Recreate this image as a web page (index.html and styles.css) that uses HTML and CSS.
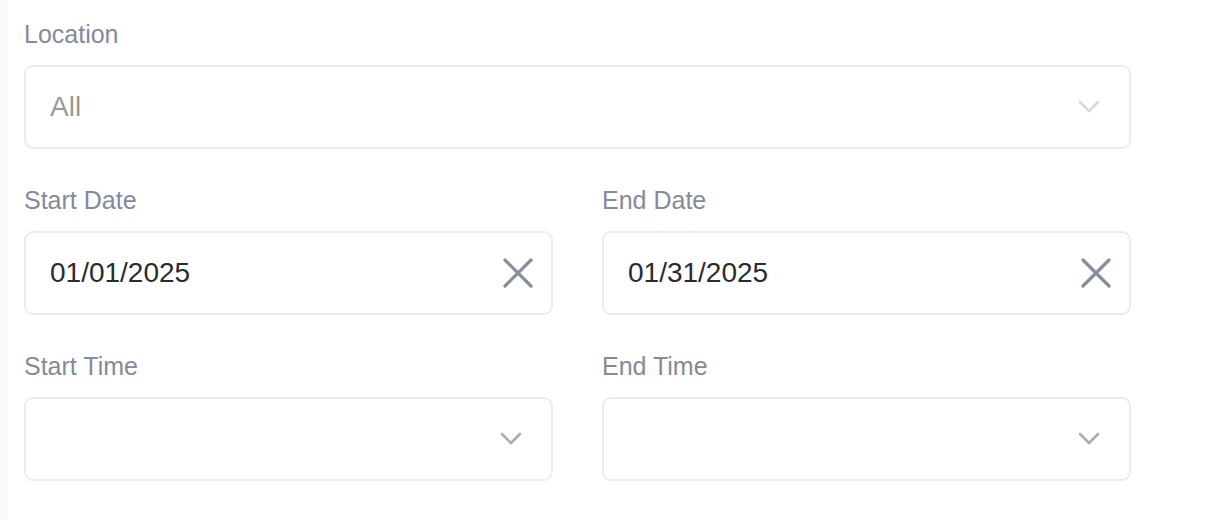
FILE: index.html
```html
<html>
<head>
    <meta http-equiv="Content-Type" content="text/html; charset=UTF-8" />
    <title>Report Filters</title>
    <link rel="stylesheet" href="styles.css">
</head>
<body>

<div class="filterForm">

    <!-- LOCATION -->
    <div class="field">
        <label class="fieldLabel">Location</label>
        <div class="fieldBox disabled">
            <span class="fieldValue placeholder">All</span>
            <svg class="chevron" width="22" height="14" viewBox="0 0 22 14">
                <polyline points="2,2 11,11 20,2" />
            </svg>
        </div>
    </div>

    <!-- DATES -->
    <div class="fieldRow">
        <div class="field">
            <label class="fieldLabel">Start Date</label>
            <div class="fieldBox">
                <span class="fieldValue">01/01/2025</span>
                <svg class="clear" width="30" height="30" viewBox="0 0 30 30">
                    <line x1="2" y1="2" x2="28" y2="28" />
                    <line x1="28" y1="2" x2="2" y2="28" />
                </svg>
            </div>
        </div>
        <div class="field">
            <label class="fieldLabel">End Date</label>
            <div class="fieldBox">
                <span class="fieldValue">01/31/2025</span>
                <svg class="clear" width="30" height="30" viewBox="0 0 30 30">
                    <line x1="2" y1="2" x2="28" y2="28" />
                    <line x1="28" y1="2" x2="2" y2="28" />
                </svg>
            </div>
        </div>
    </div>

    <!-- TIMES -->
    <div class="fieldRow">
        <div class="field">
            <label class="fieldLabel">Start Time</label>
            <div class="fieldBox">
                <span class="fieldValue"></span>
                <svg class="chevron" width="22" height="14" viewBox="0 0 22 14">
                    <polyline points="2,2 11,11 20,2" />
                </svg>
            </div>
        </div>
        <div class="field">
            <label class="fieldLabel">End Time</label>
            <div class="fieldBox">
                <span class="fieldValue"></span>
                <svg class="chevron" width="22" height="14" viewBox="0 0 22 14">
                    <polyline points="2,2 11,11 20,2" />
                </svg>
            </div>
        </div>
    </div>

</div>

</body>
</html>
```

FILE: styles.css
```css
html {
    width: 100%;
    height: 100%;
    background: #fff;
}

body {
    margin: 0;
    padding: 19px 0 0 16px;
    border-left: 8px solid #fafafa;
    font-family: "Liberation Sans", Helvetica, Arial, sans-serif;
    color: #333;
    background: #fff;
    min-height: 100%;
    box-sizing: border-box;
}

.filterForm {
    width: 1107px;
    display: flex;
    flex-direction: column;
    gap: 36px;
}

.fieldRow {
    display: grid;
    grid-template-columns: 1fr 1fr;
    column-gap: 49px;
}

.field {
    display: flex;
    flex-direction: column;
}

.fieldLabel {
    font-size: 25px;
    line-height: 30px;
    color: #838b9b;
    margin-bottom: 16px;
}

.fieldBox {
    height: 84px;
    box-sizing: border-box;
    border: 2px solid #ececec;
    border-radius: 9px;
    padding: 0 18px 0 24px;
    display: flex;
    align-items: center;
    justify-content: space-between;
    background: #fff;
}

.fieldValue {
    font-size: 28px;
    color: #2b2b2f;
}

.fieldValue.placeholder {
    color: #9a9a9a;
}

/* dropdown arrow */
.chevron {
    margin-right: 11px;
}

.chevron polyline {
    fill: none;
    stroke: #acacac;
    stroke-width: 2.6;
    stroke-linecap: round;
    stroke-linejoin: round;
}

.disabled .chevron polyline {
    stroke: #d8d8d8;
}

/* clear button */
.clear line {
    stroke: #878f9c;
    stroke-width: 3.2;
    stroke-linecap: round;
}
```
